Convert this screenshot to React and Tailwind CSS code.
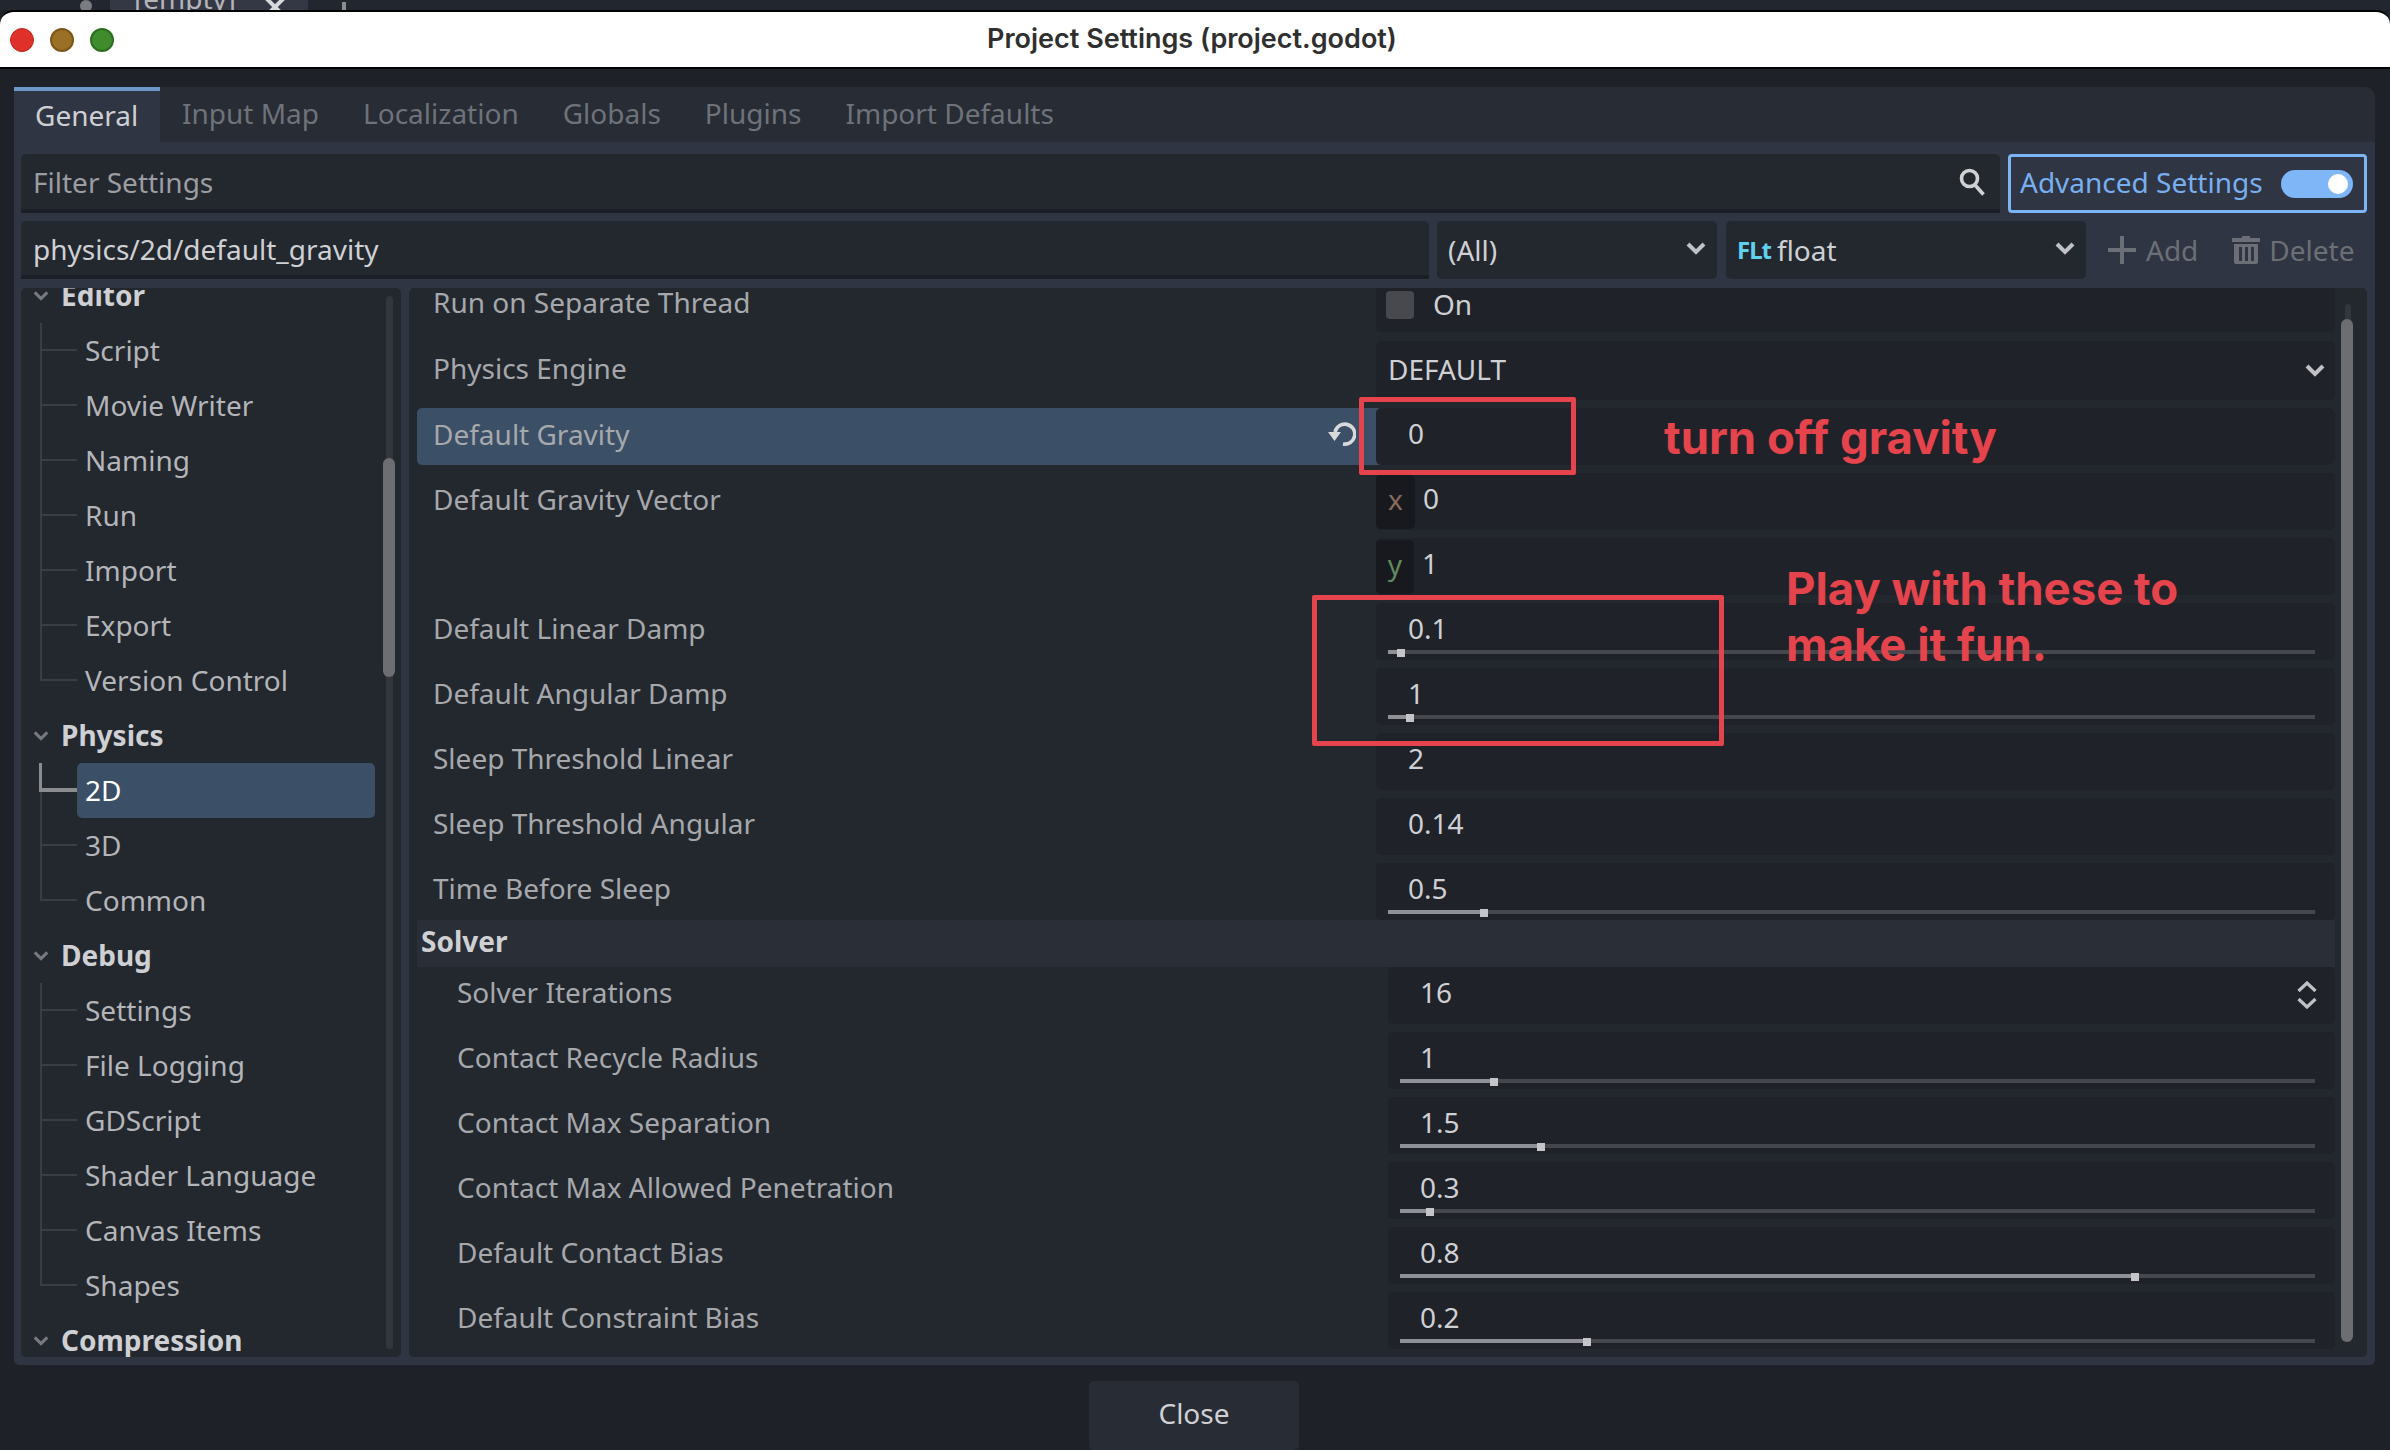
import React from 'react';

const tabs = ['Input Map', 'Localization', 'Globals', 'Plugins', 'Import Defaults'];

const tree = [
  { name: 'Editor', items: ['Script', 'Movie Writer', 'Naming', 'Run', 'Import', 'Export', 'Version Control'] },
  { name: 'Physics', items: ['2D', '3D', 'Common'] },
  { name: 'Debug', items: ['Settings', 'File Logging', 'GDScript', 'Shader Language', 'Canvas Items', 'Shapes'] },
  { name: 'Compression', items: [] },
];

const Chevron = ({ className = '' }) => (
  <svg viewBox="0 0 20 14" className={className} fill="none" stroke="currentColor" strokeWidth="4">
    <path d="M2 3l8 8 8-8" />
  </svg>
);

const Slider = ({ from, thumb }) => (
  <div className="absolute top-[47px] right-[20px] h-[4px] bg-[#46474c]" style={{ left: from }}>
    <div className="h-full bg-[#8f9196]" style={{ width: thumb }} />
    <div className="absolute top-[-1px] w-[8px] h-[8px] bg-[#c4c5ca]" style={{ left: thumb - 4 }} />
  </div>
);

const ValueBox = ({ solver, children, height = 'h-[57px]' }) => (
  <div className={`relative flex items-center rounded-[5px] bg-[#1f2229] text-[#cfd0d3] ${height} ${solver ? 'w-[947px]' : 'w-[959px]'}`}>
    {children}
  </div>
);

const Row = ({ label, solver, highlight, height, children, className = 'mt-[8px]', lift = '-mt-[8px]' }) => (
  <div className={`flex items-center rounded-[5px] ${height || 'h-[57px]'} ${highlight ? 'bg-[#3b4f66]' : ''} ${className}`}>
    <div className={`relative flex flex-1 items-center text-[#a6a8ac] ${lift} ${solver ? 'pl-[40px]' : 'pl-[16px]'}`}>
      {label}
      {highlight && (
        <svg viewBox="0 0 28 24" className="absolute right-[20px] top-[9px] w-[28px] h-[24px] text-[#d8d9db]" fill="none" stroke="currentColor" strokeWidth="3.600">
          <path d="M7 10a10 10 0 1 1 8 12" />
          <path d="M0 10h13L6.500 19z" fill="currentColor" stroke="none" />
        </svg>
      )}
    </div>
    {children}
  </div>
);

const SliderRow = ({ label, value, thumb, solver }) => (
  <Row label={label} solver={solver}>
    <ValueBox solver={solver}>
      <span className="pl-[32px] -mt-[8px]">{value}</span>
      <Slider from={12} thumb={thumb} />
    </ValueBox>
  </Row>
);

const NumberRow = ({ label, value, solver, spin, className }) => (
  <Row label={label} solver={solver} className={className}>
    <ValueBox solver={solver}>
      <span className="pl-[32px] -mt-[8px]">{value}</span>
      {spin && (
        <svg viewBox="0 0 20 28" className="absolute right-[18px] top-[14px] w-[20px] h-[28px] text-[#c0c1c4]" fill="none" stroke="currentColor" strokeWidth="3.200">
          <path d="M1.500 10L10 2l8.500 8M1.500 18l8.500 8 8.500-8" />
        </svg>
      )}
    </ValueBox>
  </Row>
);

const VectorRow = ({ label, axis, value, chipColor, chipWidth }) => (
  <Row label={label} lift="-mt-[6px]">
    <ValueBox>
      <div className={`flex items-center justify-center h-[54px] pb-[6px] rounded-[5px] bg-[#17191e] ${chipWidth} ${chipColor}`}>{axis}</div>
      <span className="pl-[8px] -mt-[8px]">{value}</span>
    </ValueBox>
  </Row>
);

const Tree = () => (
  <div className="relative flex w-[380px] shrink-0 overflow-hidden rounded-[5px] bg-[#23272e]">
    <div className="flex-1 -mt-[20px]">
      {tree.map((cat) => (
        <div key={cat.name}>
          <div className="flex items-center h-[55px]">
            <Chevron className="ml-[12px] w-[16px] h-[11px] text-[#77797e]" />
            <span className="ml-[12px] -mt-[1px] font-bold text-[#cfd0d3]">{cat.name}</span>
          </div>
          {cat.items.map((item, i) => {
            const selected = item === '2D';
            const last = i === cat.items.length - 1;
            return (
              <div key={item} className="flex h-[55px] ml-[18px]">
                <div className="flex flex-col w-[38px] shrink-0">
                  <div className={selected ? 'h-[29px] border-l-[3px] border-b-[4px] border-[#8a8c90]' : 'h-[28px] ml-[1px] border-l-2 border-b-2 border-[#3a3d44]'} />
                  {!last && <div className="flex-1 ml-[1px] border-l-2 border-[#3a3d44]" />}
                </div>
                {selected ? (
                  <div className="flex items-center w-[298px] pl-[8px] pb-[2px] rounded-[5px] bg-[#3b4f66] text-white">{item}</div>
                ) : (
                  <div className="flex items-center pl-[8px] pb-[2px] text-[#b4b5b9]">{item}</div>
                )}
              </div>
            );
          })}
        </div>
      ))}
    </div>
    <div className="absolute left-[365px] top-[8px] bottom-[8px] w-[7px] rounded-full bg-[#33363d]" />
    <div className="absolute left-[362px] top-[170px] h-[219px] w-[12px] rounded-full bg-[#6d6e72]" />
  </div>
);

const Settings = () => (
  <div className="relative flex flex-1 overflow-hidden rounded-[5px] bg-[#23272e]">
    <div className="flex-1 pl-[8px] -mt-[12px]">
      <Row label="Run on Separate Thread" height="h-[56px]" className="mt-0" lift="-mt-[4px]">
        <ValueBox height="h-[56px]">
          <div className="ml-[10px] mt-[2px] w-[28px] h-[28px] rounded-[4px] bg-[#47494f]" />
          <span className="ml-[19px]">On</span>
        </ValueBox>
      </Row>
      <Row label="Physics Engine" height="h-[59px]" className="mt-[9px]" lift="-mt-[6px]">
        <ValueBox height="h-[59px]">
          <span className="pl-[12px] -mt-[3px]">DEFAULT</span>
          <Chevron className="absolute right-[10px] top-[22px] w-[20px] h-[14px] text-[#c0c1c4]" />
        </ValueBox>
      </Row>
      <Row label="Default Gravity" highlight lift="-mt-[6px]">
        <ValueBox>
          <span className="pl-[32px] -mt-[8px]">0</span>
        </ValueBox>
      </Row>
      <VectorRow label="Default Gravity Vector" axis="x" value="0" chipColor="text-[#8a6a5c]" chipWidth="w-[39px]" />
      <VectorRow label="" axis="y" value="1" chipColor="text-[#5f8a5f]" chipWidth="w-[38px]" />
      <SliderRow label="Default Linear Damp" value="0.1" thumb={13} />
      <SliderRow label="Default Angular Damp" value="1" thumb={22} />
      <NumberRow label="Sleep Threshold Linear" value="2" />
      <NumberRow label="Sleep Threshold Angular" value="0.14" />
      <SliderRow label="Time Before Sleep" value="0.5" thumb={96} />
      <div className="flex items-center h-[47px] pl-[4px] pb-[5px] bg-[#2a2e36] font-bold text-[#cfd0d3]">Solver</div>
      <NumberRow label="Solver Iterations" value="16" solver spin className="mt-0" />
      <SliderRow label="Contact Recycle Radius" value="1" thumb={94} solver />
      <SliderRow label="Contact Max Separation" value="1.5" thumb={141} solver />
      <SliderRow label="Contact Max Allowed Penetration" value="0.3" thumb={30} solver />
      <SliderRow label="Default Contact Bias" value="0.8" thumb={735} solver />
      <SliderRow label="Default Constraint Bias" value="0.2" thumb={187} solver />
    </div>
    <div className="relative w-[32px] shrink-0">
      <div className="absolute left-[10px] top-[16px] bottom-[15px] w-[6px] rounded-full bg-[#33363d]" />
      <div className="absolute left-[6px] top-[31px] bottom-[15px] w-[12px] rounded-full bg-[#6d6e72]" />
    </div>
  </div>
);

export default function App() {
  return (
    <div className="relative flex flex-col w-[2390px] h-[1450px] overflow-hidden bg-[#1e2128] font-['Noto_Sans',sans-serif] text-[28px]">
      {/* editor tab peeking out behind the dialog */}
      <div className="flex items-end h-[10px] bg-[#22262f] overflow-hidden">
        <div className="ml-[80px] mb-[-2px] w-[12px] h-[12px] rounded-full bg-[#7a7c82]" />
        <div className="flex items-end ml-[18px] w-[198px] h-[10px] bg-[#343845] pl-[24px] text-[#b4b5b9] leading-none">
          <span className="-mb-[2px]">[empty]</span>
          <svg viewBox="0 0 22 22" className="ml-[28px] mb-[-8px] w-[22px] h-[22px] shrink-0 text-[#d8d9db]" fill="none" stroke="currentColor" strokeWidth="4">
            <path d="M2 2l18 18M20 2L2 20" />
          </svg>
        </div>
        <div className="ml-[34px] w-[4px] h-[8px] bg-[#8a8c90]" />
      </div>

      <div className="flex items-center justify-center relative h-[59px] border-y-2 border-black rounded-t-[14px] bg-white">
        <div className="absolute left-[10px] flex gap-[16px]">
          <div className="w-[24px] h-[24px] rounded-full bg-[#e0302a] border border-[#c0281f]" />
          <div className="w-[24px] h-[24px] rounded-full bg-[#9a7026] border-2 border-[#7c5518]" />
          <div className="w-[24px] h-[24px] rounded-full bg-[#3e8c2c] border-2 border-[#2c6e20]" />
        </div>
        <span className="font-['Inter',sans-serif] font-semibold text-[27px] text-[#2f2f2f] ml-[-6px] -mt-[1px]">Project Settings (project.godot)</span>
      </div>

      <div className="flex h-[55px] mt-[18px] mx-[14px] w-[2361px] rounded-tr-[10px] bg-[#282c35] shrink-0">
        <div className="flex items-center w-[146px] pl-[21px] pb-[3px] border-t-4 border-[#6c97c8] bg-[#2f3542] text-[#cfd0d3]">General</div>
        <div className="flex pl-[1px]">
          {tabs.map((t) => (
            <div key={t} className="flex items-center ml-[21px] mr-[23px] pb-[3px] text-[#6f7279]">{t}</div>
          ))}
        </div>
      </div>

      <div className="flex flex-col w-[2361px] h-[1223px] ml-[14px] pl-[7px] pr-[8px] pt-[12px] pb-[8px] rounded-b-[5px] bg-[#2f3542] shrink-0">
        <div className="flex h-[59px] gap-[8px]">
          <div className="flex items-center justify-between flex-1 pl-[12px] pr-[15px] rounded-t-[5px] border-b-4 border-[#1c1f26] bg-[#23272e] text-[#9b9da1]">
            Filter Settings
            <svg viewBox="0 0 26 28" className="w-[26px] h-[28px] text-[#d0d1d3]" fill="none" stroke="currentColor" strokeWidth="3.600">
              <circle cx="10.500" cy="10.500" r="8" />
              <path d="M16 17l8.500 9.500" />
            </svg>
          </div>
          <div className="flex items-center justify-between w-[359px] pl-[9px] pr-[11px] rounded-[4px] border-[3px] border-[#7db4f5] text-[#78aff0]">
            <span className="-mt-[3px]">Advanced Settings</span>
            <div className="flex items-center justify-end w-[72px] h-[28px] pr-[5px] rounded-full bg-[#7fb6f7]">
              <div className="w-[20px] h-[20px] rounded-full bg-white" />
            </div>
          </div>
        </div>

        <div className="flex h-[58px] mt-[8px] mb-[9px] items-stretch">
          <div className="flex items-center w-[1408px] pl-[12px] pt-[1px] rounded-t-[5px] border-b-4 border-[#1c1f26] bg-[#23272e] text-[#cfd0d3]">physics/2d/default_gravity</div>
          <div className="relative flex items-center w-[280px] ml-[8px] pl-[11px] rounded-[5px] bg-[#23272e] text-[#cfd0d3]">
            (All)
            <Chevron className="absolute right-[11px] top-[20px] w-[20px] h-[14px] text-[#c0c1c4]" />
          </div>
          <div className="relative flex items-center w-[360px] ml-[9px] pl-[11px] rounded-[5px] bg-[#23272e] text-[#cfd0d3]">
            <span className="w-[40px] font-bold text-[24px] tracking-[-1px] text-[#5fd0f0]">FLt</span>
            float
            <Chevron className="absolute right-[11px] top-[20px] w-[20px] h-[14px] text-[#c0c1c4]" />
          </div>
          <div className="flex items-center ml-[22px] text-[#6d6f76]">
            <svg viewBox="0 0 28 28" className="w-[28px] h-[28px]" fill="currentColor">
              <path d="M12 0h4v12h12v4H16v12h-4V16H0v-4h12z" />
            </svg>
            <span className="ml-[10px]">Add</span>
            <svg viewBox="0 0 28 28" className="ml-[34px] w-[28px] h-[28px]" fill="currentColor">
              <path d="M10 0h8v2h10v4H0V2h10zM2 8h24v18a2 2 0 0 1-2 2H4a2 2 0 0 1-2-2zm5 3v14h3V11zm6 0v14h3V11zm6 0v14h3V11z" fillRule="evenodd" />
            </svg>
            <span className="ml-[9px]">Delete</span>
          </div>
        </div>

        <div className="flex flex-1 gap-[8px] overflow-hidden">
          <Tree />
          <Settings />
        </div>
      </div>

      <div className="flex justify-center mt-[16px] ml-[-2px]">
        <div className="flex items-center justify-center w-[210px] h-[69px] pb-[5px] rounded-[5px] bg-[#282c35] text-[#cfd0d3]">Close</div>
      </div>

      {/* red notes drawn over the screenshot */}
      <div className="absolute left-[1359px] top-[397px] w-[217px] h-[78px] rounded-[2px] border-[5px] border-[#e5444c]" />
      <div className="absolute left-[1312px] top-[595px] w-[412px] h-[151px] rounded-[2px] border-[5px] border-[#e5444c]" />
      <div className="absolute left-[1664px] top-[410px] font-['Inter',sans-serif] font-bold text-[45.500px] leading-[56px] text-[#e5444c]">turn off gravity</div>
      <div className="absolute left-[1786px] top-[561px] font-['Inter',sans-serif] font-bold text-[45.500px] leading-[56px] text-[#e5444c]">
        Play with these to
        <br />
        make it fun.
      </div>
    </div>
  );
}
